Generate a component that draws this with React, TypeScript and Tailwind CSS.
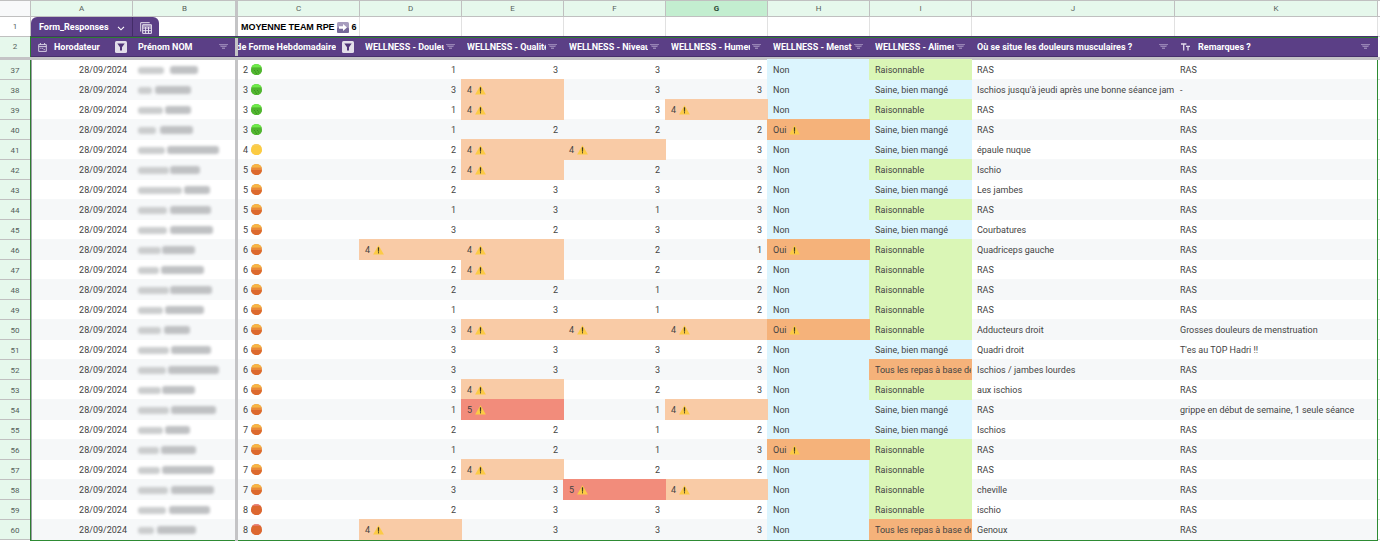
import type { ReactNode } from "react";

type Tone = "plain" | "blue" | "green" | "salmon" | "orange" | "red";

const toneClass: Record<Tone, string> = {
  plain: "",
  blue: "bg-[#dcf5fe] z-[1]",
  green: "bg-[#daf6b6] z-[2]",
  salmon: "bg-[#f9cba6] z-[3]",
  orange: "bg-[#f5b27a] z-[4]",
  red: "bg-[#f28c7b] z-[5]",
};

type Row = {
  n: number;
  first: number;
  gap: number;
  last: number;
  form: number;
  scores: [number, number, number, number];
  oui?: boolean;
  food: "R" | "S" | "T";
  pain: string;
  note: string;
};

const r = (
  n: number,
  name: [number, number, number],
  form: number,
  scores: [number, number, number, number],
  oui: boolean,
  food: "R" | "S" | "T",
  pain: string,
  note = "RAS",
): Row => ({ n, first: name[0], gap: name[1], last: name[2], form, scores, oui, food, pain, note });

const rows: Row[] = [
  r(37, [25, 7, 27], 2, [1, 3, 3, 2], false, "R", "RAS"),
  r(38, [13, 4, 35], 3, [3, 4, 3, 3], false, "S", "Ischios jusqu'à jeudi après une bonne séance jam", "-"),
  r(39, [24, 3, 25], 3, [1, 4, 3, 4], false, "R", "RAS"),
  r(40, [17, 5, 32], 3, [1, 2, 2, 2], true, "S", "RAS"),
  r(41, [26, 3, 51], 4, [2, 4, 4, 3], false, "S", "épaule nuque"),
  r(42, [30, 2, 29], 5, [2, 4, 2, 3], false, "R", "Ischio"),
  r(43, [43, 3, 25], 5, [2, 3, 3, 2], false, "S", "Les jambes"),
  r(44, [28, 4, 40], 5, [1, 3, 1, 3], false, "R", "RAS"),
  r(45, [28, 4, 42], 5, [3, 2, 3, 3], false, "S", "Courbatures"),
  r(46, [22, 2, 32], 6, [4, 4, 2, 1], true, "R", "Quadriceps gauche"),
  r(47, [20, 3, 42], 6, [2, 4, 2, 2], false, "R", "RAS"),
  r(48, [30, 2, 41], 6, [2, 2, 1, 2], false, "R", "RAS"),
  r(49, [24, 3, 38], 6, [1, 3, 1, 2], false, "R", "RAS"),
  r(50, [22, 4, 25], 6, [3, 4, 4, 4], true, "R", "Adducteurs droit", "Grosses douleurs de menstruation"),
  r(51, [30, 3, 39], 6, [3, 3, 3, 2], false, "S", "Quadri droit", "T'es au TOP Hadri !!"),
  r(52, [27, 3, 50], 6, [3, 3, 3, 3], false, "T", "Ischios / jambes lourdes"),
  r(53, [22, 2, 32], 6, [3, 4, 2, 3], false, "R", "aux ischios"),
  r(54, [30, 3, 44], 6, [1, 5, 1, 4], false, "S", "RAS", "grippe en début de semaine, 1 seule séance"),
  r(55, [24, 3, 24], 7, [2, 2, 1, 2], false, "S", "Ischios"),
  r(56, [20, 3, 34], 7, [1, 2, 1, 3], true, "R", "RAS"),
  r(57, [21, 3, 51], 7, [2, 4, 2, 2], false, "R", "RAS"),
  r(58, [29, 4, 42], 7, [3, 3, 5, 4], false, "R", "cheville"),
  r(59, [27, 4, 40], 8, [2, 3, 3, 2], false, "R", "ischio"),
  r(60, [15, 4, 38], 8, [4, 3, 3, 3], false, "T", "Genoux"),
];

const food = {
  R: { label: "Raisonnable", tone: "green" as Tone },
  S: { label: "Saine, bien mangé", tone: "blue" as Tone },
  T: { label: "Tous les repas à base de", tone: "orange" as Tone },
};

function Warning() {
  return (
    <svg viewBox="0 0 11 10" className="mb-px ml-[3px] h-[10px] w-[11px] shrink-0">
      <path d="M5.5 .2 10.9 9.6H.1Z" fill="#fccb45" />
      <path d="M5.05 2.6h.9L5.8 6.5h-.6Z" fill="#222" stroke="#222" strokeWidth=".3" />
      <rect x="5" y="7.3" width="1" height="1" fill="#222" />
    </svg>
  );
}

function Ball({ value }: { value: number }) {
  const kind = value <= 3 ? "g" : value === 4 ? "y" : value < 8 ? "o" : "r";
  const base = { g: "#50b52f", y: "#fbcb43", o: "#e98a3a", r: "#dc6730" }[kind];
  const top = { g: "#6eea49", y: "#f5cd68", o: "#f6b545", r: "#e98585" }[kind];
  const low = { g: "#50b52f", y: "#fbcb43", o: "#dc692e", r: "#dc6730" }[kind];
  return (
    <svg viewBox="0 0 11 11" className="mb-[2px] ml-[3px] h-[11px] w-[11px] shrink-0">
      <clipPath id={`ball-${kind}`}>
        <circle cx="5.5" cy="5.5" r="5.5" />
      </clipPath>
      <g clipPath={`url(#ball-${kind})`}>
        <rect width="11" height="11" fill={base} />
        <rect width="11" height={kind === "g" ? 3.4 : kind === "o" ? 3.6 : 1.6} fill={top} />
        <rect y="6" width="11" height="5" fill={low} />
        {kind === "g" && (
          <path d="M3 6.5h1M6 6.5h1M4 8h1M7 8h1M5 9.4h1" stroke="#32801d" strokeWidth=".7" />
        )}
      </g>
    </svg>
  );
}

function SortIcon() {
  return (
    <svg viewBox="0 0 9 6" className="h-[6px] w-[9px] shrink-0">
      <path d="M0 0h9v1H0zM1.5 2h6v1h-6zM3 4h3v1H3z" fill="#9784b5" />
      <path d="M1 1h7v1H1zM3 3h3v1H3z" fill="#765d9b" />
    </svg>
  );
}

function FilterBox() {
  return (
    <span className="flex h-3 w-3 shrink-0 items-center justify-center rounded-[1.5px] bg-[#e3dfea]">
      <svg viewBox="0 0 8 8" className="h-2 w-2">
        <path d="M.3.6h7.4L5 4.2v3.4H3V4.2Z" fill="#503578" />
      </svg>
    </span>
  );
}

function Head({ width, label, children }: { width: string; label: string; children?: ReactNode }) {
  return (
    <div className={`flex shrink-0 items-center ${width}`}>
      {children}
      <span className="mr-[2px] min-w-0 flex-1 overflow-hidden whitespace-nowrap">{label}</span>
      <SortIcon />
    </div>
  );
}

function Score({ value, lift }: { value: number; lift: string }) {
  if (value < 4)
    return <div className="flex w-[102px] shrink-0 items-center justify-end pr-[5px] pt-[2px]">{value}</div>;
  return (
    <div
      className={`relative -mr-px flex w-[103px] shrink-0 items-center pl-1.5 pt-[2px] ${lift} ${toneClass[value === 5 ? "red" : "salmon"]}`}
    >
      {value}
      <Warning />
    </div>
  );
}

function DataRow({ row }: { row: Row }) {
  const odd = row.n % 2 === 1;
  const lift = odd ? "-my-px" : "";
  const meal = food[row.food];
  return (
    <div className={`flex w-[1380px] ${odd ? "h-[19px]" : "h-[21px]"}`}>
      <div
        className={`relative flex w-[30px] shrink-0 items-center justify-center border-b border-[#c0c0c0] bg-[#e6f8ec] pt-[2px] text-[8px] text-[#55605a] ${odd ? "-mb-px" : "mt-px"}`}
      >
        {row.n}
      </div>
      <div className="w-0.5 shrink-0 border-l border-[#2e7d32] bg-[#9b9ba5]" />
      <div className={`flex w-[1345px] shrink-0 ${odd ? "bg-white" : "bg-[#f6f8f9]"}`}>
        <div className="flex w-[101px] shrink-0 items-center justify-end pr-[6px] pt-[2px]">28/09/2024</div>
        <div className="flex w-[102px] shrink-0 items-center pl-[5px] pt-px">
          <span className="h-[7px] rounded-[3px] bg-[#cbcdce] blur-[1.7px]" style={{ width: row.first + 1 }} />
          <span
            className="h-[8px] rounded-[3px] bg-[#bfc1c3] blur-[1.7px]"
            style={{ width: row.last + 1, marginLeft: row.gap - 1 }}
          />
        </div>
        <div className="relative z-10 -my-px w-[3px] shrink-0 bg-[#c4c4c6]" />
        <div className="flex w-[121px] shrink-0 items-center pl-[5px] pt-[2px]">
          {row.form}
          <Ball value={row.form} />
        </div>
        {row.scores.map((s, i) => (
          <Score key={i} value={s} lift={lift} />
        ))}
        <div
          className={`relative -mr-px flex w-[103px] shrink-0 items-center pl-1.5 pt-[2px] ${lift} ${toneClass[row.oui ? "orange" : "blue"]}`}
        >
          {row.oui ? "Oui" : "Non"}
          {row.oui && <Warning />}
        </div>
        <div
          className={`relative -mr-px flex w-[103px] shrink-0 items-center pl-1.5 pr-px pt-[2px] ${lift} ${toneClass[meal.tone]}`}
        >
          <span className="min-w-0 flex-1 overflow-hidden whitespace-nowrap py-0.5">{meal.label}</span>
        </div>
        <div className="flex w-[203px] shrink-0 items-center overflow-hidden whitespace-nowrap pl-1.5 pt-[2px]">
          {row.pain}
        </div>
        <div className="flex flex-1 items-center whitespace-nowrap pl-1.5 pt-[2px]">{row.note}</div>
      </div>
      <div className="w-px shrink-0 bg-[#2e8b34]" />
      <div className={`w-0.5 shrink-0 border-b border-[#dcdcdc] ${odd ? "-mb-px" : ""}`} />
    </div>
  );
}

const letters: [string, string][] = [
  ["A", "w-[102px]"],
  ["B", "w-[103px]"],
  ["C", "w-[122px]"],
  ["D", "w-[102px]"],
  ["E", "w-[102px]"],
  ["F", "w-[102px]"],
  ["G", "w-[102px]"],
  ["H", "w-[102px]"],
  ["I", "w-[102px]"],
  ["J", "w-[203px]"],
  ["K", "w-[203px]"],
];

export default function App() {
  return (
    <div className="h-[542px] w-[1380px] overflow-hidden bg-white font-['Roboto',sans-serif] text-[9px] leading-none text-[#434343]">
      <div className="flex h-[17px] border-y border-[#c0c0c0] text-[8px] text-[#575f5a]">
        <div className="w-[31px] shrink-0 border-r border-[#c0c0c0] bg-[#f8f9fa]" />
        {letters.map(([l, w]) => (
          <div key={l} className="contents">
            {l === "C" && <div className="-ml-px w-[3px] shrink-0 bg-[#c4c4c6]" />}
            <div
              className={`flex shrink-0 items-center justify-center pt-px ${w} ${l === "B" ? "" : "border-r border-[#c0c0c0]"} ${
                l === "G" ? "bg-[#c3eed0] font-bold text-[#2b4a35]" : "bg-[#e6f8ec]"
              }`}
            >
              {l}
            </div>
          </div>
        ))}
        <div className="flex-1 bg-white" />
      </div>

      <div className="flex h-[19px]">
        <div className="flex w-[31px] shrink-0 items-center justify-center border-r border-[#c0c0c0] pt-px text-[8px] text-[#575f5a]">
          1
        </div>
        <div className="flex w-[204px] shrink-0">
          <div className="flex w-[128px] rounded-t-[6px] bg-[#5b3f86] font-bold text-white">
            <div className="flex w-[102px] items-center justify-between border-r border-[#432c68] pl-[8px] pr-[7px] pt-[2px]">
              Form_Responses
              <svg viewBox="0 0 8 5" className="mt-[2px] h-[5px] w-2" fill="none" stroke="#fff" strokeWidth="1.1">
                <path d="m1 .8 3 3 3-3" />
              </svg>
            </div>
            <div className="flex flex-1 items-center justify-center pt-[3px]">
              <svg viewBox="0 0 12 12" className="h-3 w-3" fill="none" stroke="#e8e3ef">
                <path d="M.7 9.5V.7h9" />
                <path d="M2.7 2.7h8.7v8.7H2.7zM2.7 4h8.7M2.7 6h8.7M2.7 8.7h8.7M5.6 5v6.4M8.5 5v6.4" />
              </svg>
            </div>
          </div>
        </div>
        <div className="w-[3px] shrink-0 bg-[#c4c4c6]" />
        <div className="flex w-[122px] shrink-0 items-center whitespace-nowrap border-r border-[#e1e1e1] pl-[3px] pt-px font-['Liberation_Sans',sans-serif] font-bold text-black">
          <span className="tracking-[-0.06px]">MOYENNE TEAM RPE</span>
          <svg viewBox="0 0 12 11" className="ml-[2px] mr-[3px] h-[11px] w-[12px] shrink-0">
            <rect width="12" height="11" rx="1.5" fill="#a79dbe" />
            <rect y="5.5" width="12" height="5.5" rx="1.5" fill="#76699a" />
            <path d="M2 4.2h4V2l4 3.5L6 9V6.8H2Z" fill="#fff" />
          </svg>
          6
        </div>
        {letters.slice(3).map(([l, w]) => (
          <div key={l} className={`shrink-0 border-r border-[#e1e1e1] ${w}`} />
        ))}
      </div>

      <div className="flex h-[21px]">
        <div className="flex w-[30px] shrink-0 items-center justify-center border-t border-[#c0c0c0] bg-[#e6f8ec] text-[8px] text-[#55605a]">
          2
        </div>
        <div className="w-px shrink-0 bg-[#2e7d32]" />
        <div className="flex w-[1347px] shrink-0 flex-col border-b border-t border-b-[#46306c] border-t-[#46306c] bg-[#5b3f86] font-bold text-white">
          <div className="h-px shrink-0 bg-[#2e7d32]" />
          <div className="flex flex-1">
            <div className="flex w-[102px] shrink-0 items-center pl-[7px] pr-[6px]">
              <svg viewBox="0 0 9 9" className="h-[9px] w-[9px]" fill="none" stroke="#e2dcec" strokeWidth=".9">
                <path d="M.7 1.6h7.6v6.8H.7zM.7 3.6h7.6M2.4 0v1.6M6.6 0v1.6M2.4 5.4h1M4.2 5.4h1M5.6 6.6h1.2" />
              </svg>
              <span className="ml-[7px] flex-1">Horodateur</span>
              <FilterBox />
            </div>
            <Head width="w-[102px] pl-[5px] pr-[7px]" label="Prénom NOM" />
            <div className="w-[3px] shrink-0 bg-[#c4c4c6]" />
            <div className="flex w-[121px] shrink-0 items-center pr-[5px]">
              <span className="flex w-[98px] justify-end overflow-hidden whitespace-nowrap">
                de Forme Hebdomadaire
              </span>
              <span className="flex-1" />
              <FilterBox />
            </div>
            <Head width="w-[102px] pl-1.5 pr-[6px]" label="WELLNESS - Douleu" />
            <Head width="w-[102px] pl-1.5 pr-[6px]" label="WELLNESS - Qualité" />
            <Head width="w-[102px] pl-1.5 pr-[6px]" label="WELLNESS - Niveau" />
            <Head width="w-[102px] pl-1.5 pr-[6px]" label="WELLNESS - Humeu" />
            <Head width="w-[102px] pl-1.5 pr-[6px]" label="WELLNESS - Menst" />
            <Head width="w-[102px] pl-1.5 pr-[6px]" label="WELLNESS - Alimen" />
            <Head width="w-[203px] pl-1.5 pr-[6px]" label="Où se situe les douleurs musculaires ?" />
            <Head width="w-[203px] pl-[7px] pr-[7px]" label="Remarques ?">
              <svg viewBox="0 0 9 8" className="mr-[8px] h-2 w-[9px]" fill="none" stroke="#e2dcec" strokeWidth="1.3">
                <path d="M0 1h5.4M2.7 1v6.5M5 3.4h4M7 3.4v4.1" />
              </svg>
            </Head>
          </div>
        </div>
        <div className="w-0.5 border-t border-[#dcdcdc]" />
      </div>

      <div className="h-[3px] bg-[#c4c4c6]" />

      <div>
        {rows.map((row) => (
          <DataRow key={row.n} row={row} />
        ))}
      </div>
      <div className="ml-[30px] h-px w-[1348px] bg-[#2e8b34]" />
    </div>
  );
}
